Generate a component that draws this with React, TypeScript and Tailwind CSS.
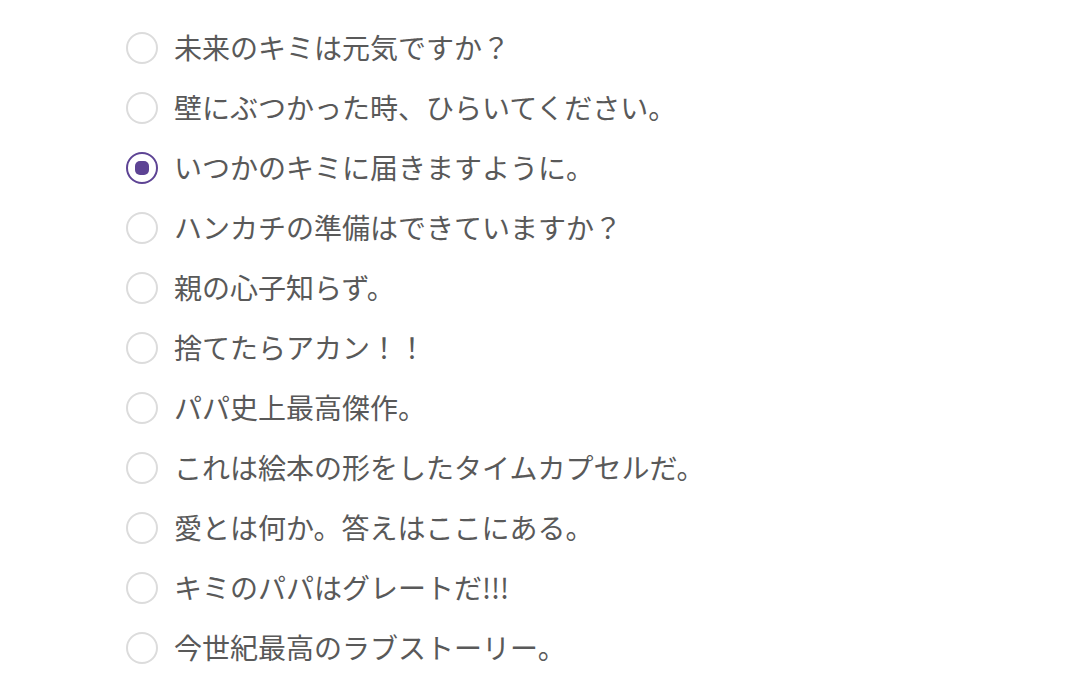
const options = [
  "未来のキミは元気ですか？",
  "壁にぶつかった時、ひらいてください。",
  "いつかのキミに届きますように。",
  "ハンカチの準備はできていますか？",
  "親の心子知らず。",
  "捨てたらアカン！！",
  "パパ史上最高傑作。",
  "これは絵本の形をしたタイムカプセルだ。",
  "愛とは何か。答えはここにある。",
  "キミのパパはグレートだ!!!",
  "今世紀最高のラブストーリー。",
];

export default function App() {
  const selected = 2;
  return (
    <div className="min-h-screen bg-white pt-[18px] pl-[126px] font-['Noto_Sans_CJK_JP','Noto_Sans',sans-serif]">
      <ul className="flex flex-col">
        {options.map((label, i) => (
          <li key={label} className="flex h-[60px] items-center">
            <span
              className={
                i === selected
                  ? "flex h-[32px] w-[32px] shrink-0 items-center justify-center rounded-full border-2 border-[#5d4394]"
                  : "flex h-[32px] w-[32px] shrink-0 items-center justify-center rounded-full border-2 border-[#dcdcdc]"
              }
            >
              {i === selected && <span className="h-[14px] w-[14px] rounded-[5px] bg-[#5d4394]" />}
            </span>
            <span className="ml-[16px] -mt-[3px] text-[28px] leading-none text-[#595959]">{label}</span>
          </li>
        ))}
      </ul>
    </div>
  );
}
